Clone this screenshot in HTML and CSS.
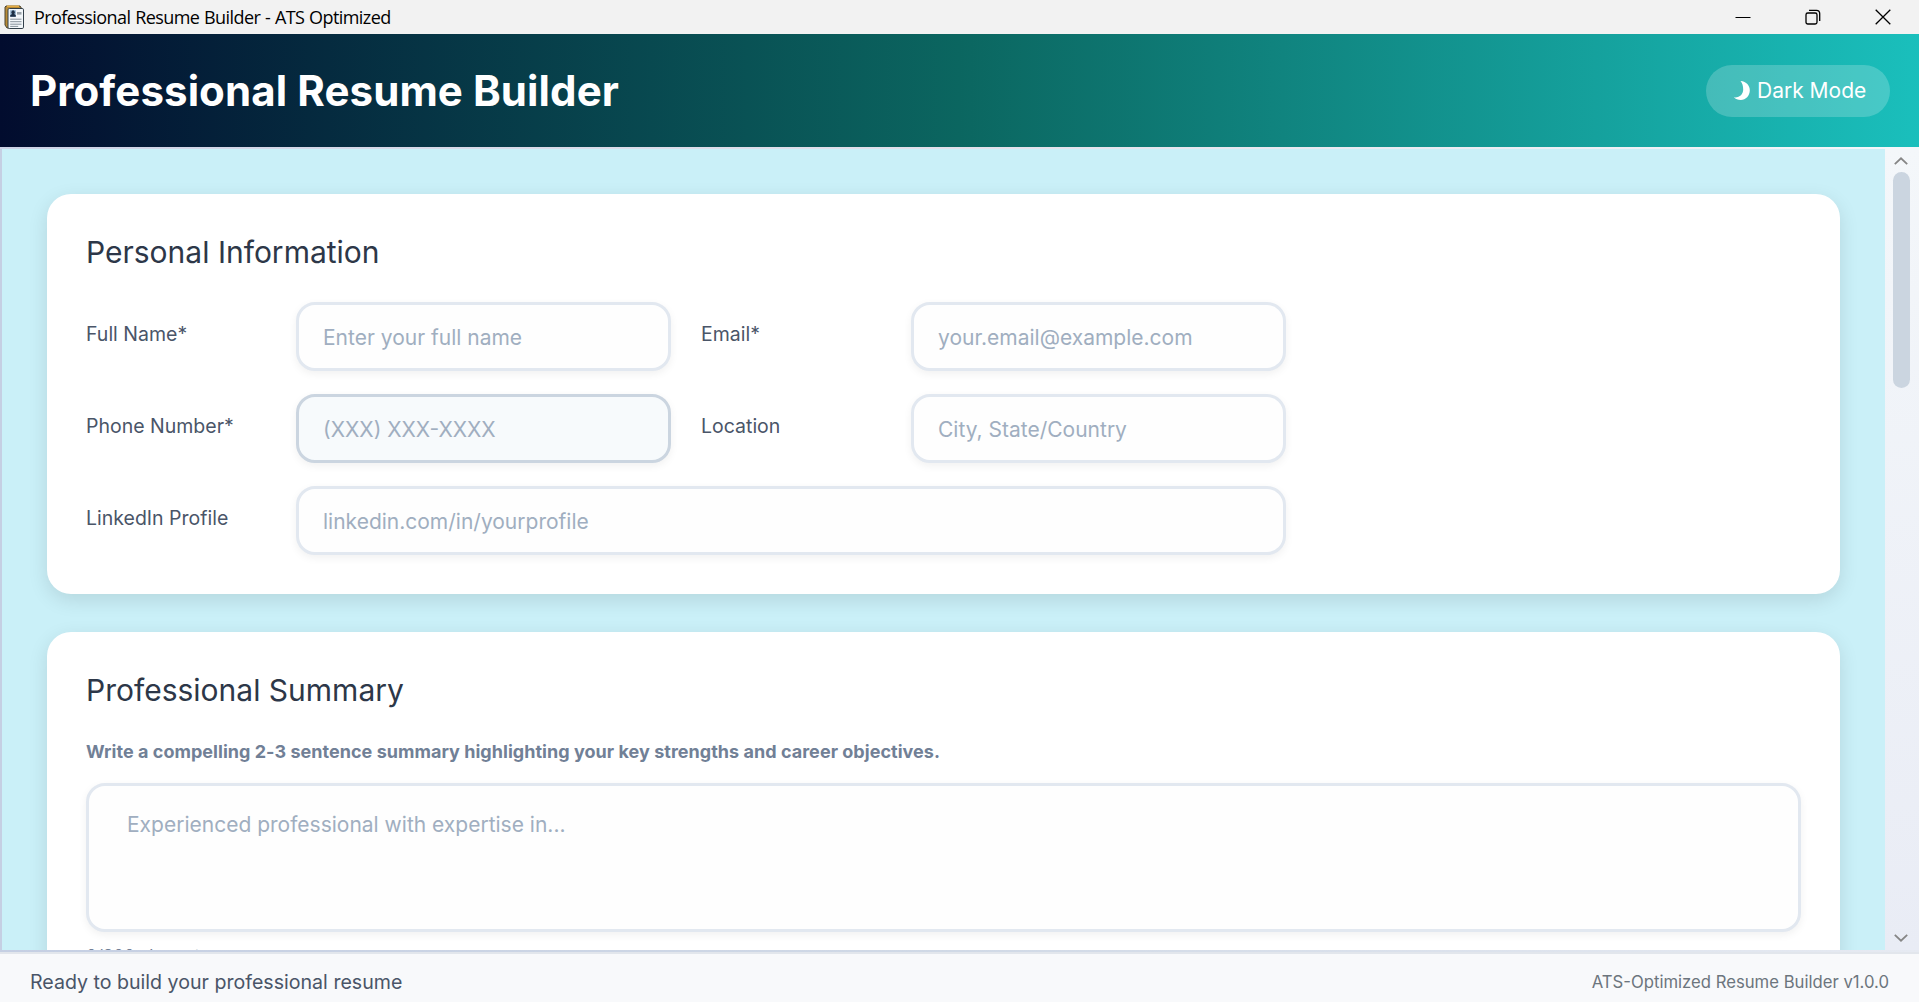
FILE: index.html
```html
<!DOCTYPE html>
<html lang="en">
<head>
<meta charset="utf-8">
<title>Professional Resume Builder - ATS Optimized</title>
<link rel="stylesheet" href="styles.css">
</head>
<body>
<div class="titlebar">
  <svg class="app-icon" width="21" height="25" viewBox="0 0 21 25">
    <path d="M2 1h14l2 3v19H3L1 20V2z" fill="#b98b35" stroke="#4a4434" stroke-width="1"/>
    <path d="M3 1.2h12" stroke="#f0b64a" stroke-width="1.4"/>
    <rect x="4" y="3.5" width="15.5" height="20" rx="1.3" fill="#f3f7fa" stroke="#33404a"/>
    <rect x="6.2" y="5.2" width="5.6" height="6.6" fill="#8fb0cc"/>
    <path d="M6.200 11.800V10.200l1.800-1.200a1.700 2 0 1 1 2.200 0l1.600 1.200v1.600z" fill="#1d2f45"/>
    <rect x="13" y="7" width="4.500" height="2.600" fill="#9aa3aa"/>
    <path d="M6.200 14.200h11.300M6.200 16.700h11.300M6.200 19.200h11.300M6.200 21.400h8" stroke="#87919a" stroke-width="1"/>
  </svg>
  <span class="window-title">Professional Resume Builder - ATS Optimized</span>
  <div class="window-controls">
    <svg width="16" height="16" viewBox="0 0 16 16"><path d="M.5 8.500h15" stroke="#000"/></svg>
    <svg width="16" height="16" viewBox="0 0 16 16" fill="none" stroke="#000" stroke-width="1.300"><rect x="1" y="4" width="11" height="11" rx="1.800"/><path d="M4 1.300h7.500a3.200 3.200 0 0 1 3.200 3.200V12"/></svg>
    <svg width="16" height="16" viewBox="0 0 16 16"><path d="M.7.7l14.600 14.600M15.300.7L.7 15.300" stroke="#000" stroke-width="1.300"/></svg>
  </div>
</div>
<header class="header">
  <h1>Professional Resume Builder</h1>
  <button class="theme-toggle" type="button">
    <svg width="16" height="19" viewBox="0 0 16 19"><path d="M6.500 0C12.500.5 15.800 4.500 15.800 9.300c0 5.500-4 9.700-9 9.700-3 0-5.300-1-6.800-2.700C5.500 17 9 13.500 9.200 8.800 9.300 5 8.300 2.300 6.500 0z" fill="#fff"/></svg>
    <span>Dark Mode</span>
  </button>
</header>
<div class="workspace">
  <main class="content">
    <section class="card">
      <h2>Personal Information</h2>
      <div class="form-grid">
        <label for="name">Full Name*</label>
        <input id="name" type="text" placeholder="Enter your full name">
        <label for="email">Email*</label>
        <input id="email" type="text" placeholder="your.email@example.com">
        <label for="phone">Phone Number*</label>
        <input id="phone" class="hovered" type="text" placeholder="(XXX) XXX-XXXX">
        <label for="location">Location</label>
        <input id="location" type="text" placeholder="City, State/Country">
        <label for="linkedin">LinkedIn Profile</label>
        <input id="linkedin" class="wide" type="text" placeholder="linkedin.com/in/yourprofile">
      </div>
    </section>
    <section class="card">
      <h2>Professional Summary</h2>
      <p class="hint">Write a compelling 2-3 sentence summary highlighting your key strengths and career objectives.</p>
      <textarea class="summary" placeholder="Experienced professional with expertise in..."></textarea>
      <p class="counter">0/300 characters</p>
    </section>
  </main>
  <div class="scrollbar">
    <svg width="14" height="8" viewBox="0 0 14 8"><path d="M.8 7.200L7 1.300l6.200 5.900" fill="none" stroke="#868686" stroke-width="1.800"/></svg>
    <div class="thumb"></div>
    <svg class="down" width="14" height="8" viewBox="0 0 14 8"><path d="M.8.800L7 6.700 13.200.8" fill="none" stroke="#868686" stroke-width="1.800"/></svg>
  </div>
</div>
<footer class="statusbar">
  <span class="status">Ready to build your professional resume</span>
  <span class="version">ATS-Optimized Resume Builder v1.0.0</span>
</footer>
</body>
</html>
```
FILE: styles.css
```css
* { box-sizing: border-box; }

body {
  margin: 0;
  height: 1002px;
  display: flex;
  flex-direction: column;
  overflow: hidden;
  font-family: Inter, "Liberation Sans", sans-serif;
  background: #f8f9fb;
}

h1, h2, p { margin: 0; }

.titlebar {
  height: 34px;
  flex: none;
  display: flex;
  align-items: center;
  padding: 0 28px 0 4px;
  background: #f2f2f2;
}
.app-icon { margin-right: 9px; }
.window-title {
  font: 18px/34px "Open Sans", "Noto Sans", sans-serif;
  letter-spacing: -0.57px;
  word-spacing: 0.6px;
  color: #000;
}
.window-controls {
  margin-left: auto;
  display: flex;
  align-items: center;
  gap: 54px;
}

.header {
  height: 113px;
  flex: none;
  display: flex;
  align-items: center;
  justify-content: space-between;
  padding: 0 29px 0 30px;
  background: linear-gradient(90deg, #020c2e 0%, #0b6660 50%, #1abfbc 100%);
  color: #fff;
}
.header h1 {
  font-size: 42px;
  font-weight: 700;
  line-height: 52px;
  letter-spacing: 0.1px;
}
.theme-toggle {
  width: 184px;
  height: 52px;
  display: flex;
  align-items: center;
  gap: 7px;
  padding: 0 0 0 28px;
  border: 0;
  border-radius: 26px;
  background: rgba(255, 255, 255, .2);
  color: #fff;
  font: 21px/26px Inter, sans-serif;
}

.workspace {
  height: 805px;
  flex: none;
  display: flex;
  overflow: hidden;
  padding: 2px 0 2px 2px;
  background:
    linear-gradient(90deg, #cdd3e6 0, #e2e0ea 50%, #f4f7fa 100%) 0 0 / 100% 2px no-repeat,
    linear-gradient(90deg, #c5cfe3 0, #d0d9e6 50%, #e6eaf2 100%);
}
.content {
  width: 1883px;
  flex: none;
  display: flex;
  flex-direction: column;
  gap: 38px;
  padding: 45px;
  overflow: hidden;
  background: #caf0f8;
}
.card {
  flex: none;
  height: 400px;
  padding: 38px 39px;
  border-radius: 24px;
  background: #fff;
  box-shadow: 0 6px 20px rgba(0, 0, 0, .11);
}
.card h2 {
  font-size: 30px;
  font-weight: 400;
  line-height: 40px;
  color: #2d3748;
}
.form-grid {
  display: grid;
  grid-template-columns: 180px 375px 180px 375px;
  grid-template-rows: repeat(3, 69px);
  column-gap: 30px;
  row-gap: 23px;
  margin-top: 30px;
}
label {
  font-size: 19.5px;
  line-height: 65px;
  color: #4a5568;
}
input, textarea {
  display: block;
  border: 3px solid #e2e8f0;
  border-radius: 19px;
  background: #fefefe;
  box-shadow: 0 3px 8px rgba(0, 0, 0, .06);
  font: 21px/26px Inter, sans-serif;
  color: #2d3748;
  outline: none;
  resize: none;
}
input { width: 100%; height: 69px; padding: 1px 24px 0; }
.wide { grid-column: 2 / 5; }
.hovered { border-color: #cbd5e0; background: #f7fafc; }
::placeholder { color: #a0aec0; opacity: 1; }

.hint {
  margin-top: 29px;
  font-size: 18px;
  font-weight: 700;
  line-height: 26px;
  letter-spacing: 0.033px;
  color: #718096;
}
.summary {
  width: 1715px;
  height: 149px;
  margin-top: 18px;
  padding: 26px 38px;
}
.counter {
  margin-top: 11px;
  font-size: 17px;
  line-height: 26px;
  color: #718096;
}

.scrollbar {
  flex: 1;
  display: flex;
  flex-direction: column;
  align-items: center;
  margin: -2px 0 0;
  padding: 10px 2px 8px 0;
  background: linear-gradient(#f4f7fa, #e9ecf5);
}
.thumb {
  width: 17px;
  height: 216px;
  margin-top: 7px;
  border-radius: 9px;
  background: #cbd5e0;
}
.down { margin-top: auto; }

.statusbar {
  flex: 1;
  display: flex;
  align-items: center;
  justify-content: space-between;
  padding: 8px 30px 0;
  border-top: 2px solid #e2e6ec;
  background: #f8f9fb;
}
.status { font-size: 19.6px; color: #4a5568; }
.version { font-size: 16.7px; color: #6c757d; }
```
